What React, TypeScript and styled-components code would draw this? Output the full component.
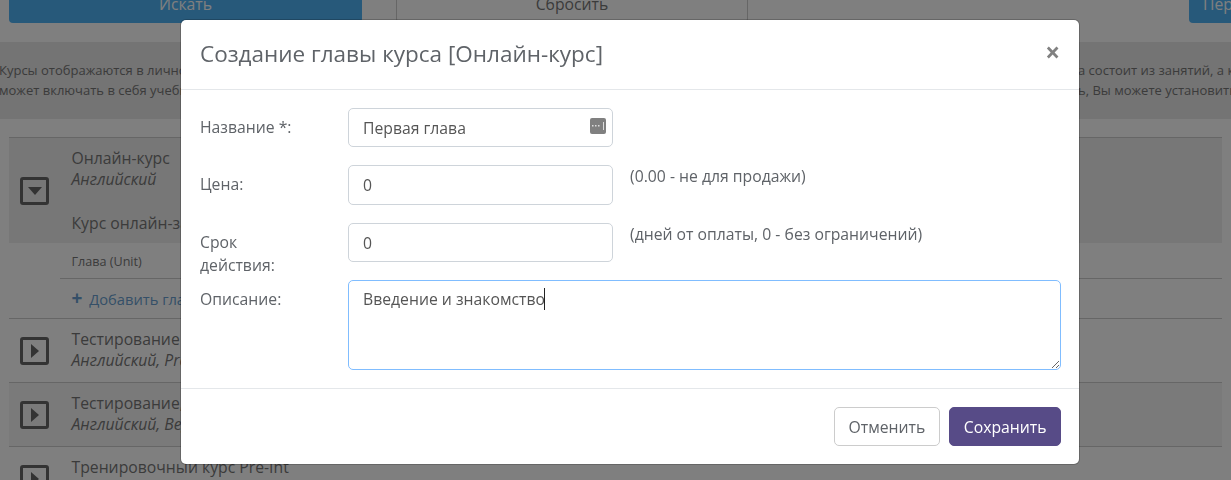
import styled, { createGlobalStyle } from "styled-components";

const GlobalStyle = createGlobalStyle`
  * {
    box-sizing: border-box;
  }

  html,
  body {
    margin: 0;
    padding: 0;
    height: 480px;
    overflow: hidden;
    background: #fff;
    font-family: "Open Sans", "Noto Sans", sans-serif;
    font-size: 15.75px;
    color: #777;
  }
`;

const courses = [
  { title: "Тестирование", subtitle: "Английский, Pre-Intermediate", shaded: false },
  { title: "Тестирование, входной", subtitle: "Английский, Beginner", shaded: true },
  { title: "Тренировочный курс Pre-Int", subtitle: "Английский, Pre-Intermediate", shaded: false },
];

const CourseIcon = ({ open }: { open?: boolean }) => (
  <IconBox>
    <svg width="14" height="14" viewBox="0 0 14 14">
      {open ? <path d="M0 3h14L7 11z" fill="#666" /> : <path d="M3 0l8 7-8 7z" fill="#666" />}
    </svg>
  </IconBox>
);

const App = () => {
  return (
    <>
      <GlobalStyle />
      <Page>
        <SearchBar>
          <SearchButton>Искать</SearchButton>
          <ResetButton>Сбросить</ResetButton>
          <BarSpacer />
          <CreateButton>Перейти</CreateButton>
        </SearchBar>

        <InfoBand>
          <InfoLine>
            <InfoLeft>Курсы отображаются в личном кабинете ученика</InfoLeft>
            <InfoRight>а состоит из занятий, а каждое занятие</InfoRight>
          </InfoLine>
          <InfoLine>
            <InfoLeft>может включать в себя учебные материалы</InfoLeft>
            <InfoRight>ь, Вы можете установить цену</InfoRight>
          </InfoLine>
        </InfoBand>

        <CourseList>
          <OpenCourse>
            <CourseHead>
              <OpenIconColumn>
                <CourseIcon open />
              </OpenIconColumn>
              <div>
                <CourseTitle>Онлайн-курс</CourseTitle>
                <CourseSubtitle>Английский</CourseSubtitle>
                <CourseKind>Курс онлайн-занятий</CourseKind>
              </div>
            </CourseHead>
            <UnitHeader>Глава (Unit)</UnitHeader>
            <AddUnit>
              <PlusSign>+</PlusSign> Добавить главу
            </AddUnit>
          </OpenCourse>

          {courses.map((course) => (
            <CourseRow key={course.title} $shaded={course.shaded}>
              <IconColumn>
                <CourseIcon />
              </IconColumn>
              <div>
                <CourseTitle>{course.title}</CourseTitle>
                <CourseSubtitle>{course.subtitle}</CourseSubtitle>
              </div>
            </CourseRow>
          ))}
        </CourseList>
      </Page>

      <Backdrop />

      <Modal>
        <ModalHeader>
          <ModalTitle>Создание главы курса [Онлайн-курс]</ModalTitle>
          <CloseButton>×</CloseButton>
        </ModalHeader>

        <ModalBody>
          <FormRow $height={57}>
            <FieldLabel>Название *:</FieldLabel>
            <InputWrap>
              <TextInput defaultValue="Первая глава" $height={39} />
              <KeyIcon width="16" height="16" viewBox="0 0 16 16">
                <rect width="16" height="16" rx="2" fill="#808080" />
                <rect x="2" y="7" width="1.5" height="1.5" fill="#ddd" />
                <rect x="5" y="7" width="1.5" height="1.5" fill="#ddd" />
                <rect x="8" y="7" width="1.5" height="1.5" fill="#ddd" />
                <rect x="13" y="4" width="1" height="8" fill="#ddd" />
              </KeyIcon>
            </InputWrap>
          </FormRow>
          <FormRow $height={58}>
            <FieldLabel>Цена:</FieldLabel>
            <InputWrap>
              <TextInput defaultValue="0" $height={40} />
            </InputWrap>
            <FieldHint>(0.00 - не для продажи)</FieldHint>
          </FormRow>
          <FormRow $height={57}>
            <FieldLabel $wrapped>Срок действия:</FieldLabel>
            <InputWrap>
              <TextInput defaultValue="0" $height={39} />
            </InputWrap>
            <FieldHint>(дней от оплаты, 0 - без ограничений)</FieldHint>
          </FormRow>
          <FormRow $height={90}>
            <FieldLabel>Описание:</FieldLabel>
            <DescriptionWrap>
              <Description defaultValue="Введение и знакомство" />
              <TextCursor />
            </DescriptionWrap>
          </FormRow>
        </ModalBody>

        <ModalFooter>
          <CancelButton>Отменить</CancelButton>
          <SaveButton>Сохранить</SaveButton>
        </ModalFooter>
      </Modal>
    </>
  );
};

const Page = styled.div`
  height: 480px;
  overflow: hidden;
`;

const SearchBar = styled.div`
  display: flex;
  height: 23px;
  margin: 0 0 19px;
  padding: 0 0 0 9px;
`;

const BarButton = styled.button`
  height: 39px;
  margin-top: -16px;
  padding: 0;
  border-radius: 4px;
  font-family: inherit;
  font-size: 15.75px;
  line-height: 20px;
`;

const SearchButton = styled(BarButton)`
  width: 353px;
  border: 0;
  background: #4eb2f4;
  color: #fff;
`;

const ResetButton = styled(BarButton)`
  width: 352px;
  margin-left: 34px;
  border: 1px solid #ccc;
  background: #fff;
  color: #777;
`;

const BarSpacer = styled.div`
  flex: 1;
`;

const CreateButton = styled(BarButton)`
  flex: none;
  width: 120px;
  margin-right: -78px;
  border: 0;
  background: #4eb2f4;
  color: #fff;
  text-align: left;
  padding-left: 14px;
`;

const InfoBand = styled.div`
  height: 77px;
  padding: 18px 0 0;
  background: #e8e8e8;
  font-size: 13px;
  line-height: 20px;
  color: #777;
`;

const InfoLine = styled.div`
  display: flex;
  white-space: nowrap;
  overflow: hidden;
`;

const InfoLeft = styled.span`
  flex: none;
  width: 1079px;
  margin-left: -1px;
`;

const InfoRight = styled.span`
  flex: none;
`;

const CourseList = styled.div`
  margin: 18px 0 0 9px;
  width: 1213px;
  border-top: 1px solid #ccc;
`;

const OpenCourse = styled.div`
  border-bottom: 1px solid #ccc;
`;

const CourseHead = styled.div`
  display: flex;
  height: 105px;
  padding-top: 9px;
  background: #eee;
`;

const IconColumn = styled.div`
  flex: none;
  width: 62.5px;
  padding: 9px 0 0 11px;
`;

const OpenIconColumn = styled(IconColumn)`
  padding-top: 30px;
`;

const IconBox = styled.div`
  display: flex;
  align-items: center;
  justify-content: center;
  width: 29px;
  height: 28px;
  border: 3px solid #666;
  border-radius: 3px;
`;

const CourseTitle = styled.div`
  font-size: 15.75px;
  line-height: 22px;
`;

const CourseSubtitle = styled.div`
  font-size: 15.75px;
  line-height: 21px;
  font-style: italic;
`;

const CourseKind = styled.div`
  margin-top: 22px;
  font-size: 15.75px;
  line-height: 22px;
`;

const UnitHeader = styled.div`
  height: 36px;
  margin-left: 51px;
  padding: 10px 0 0 11.5px;
  border-bottom: 1px solid #ccc;
  font-size: 12.6px;
  line-height: 18px;
`;

const AddUnit = styled.div`
  height: 39px;
  padding: 8px 0 0 62.5px;
  font-size: 14.7px;
  line-height: 22px;
  color: #6a9fd0;
`;

const PlusSign = styled.span`
  font-weight: 700;
  font-size: 19px;
  margin-right: 3px;
`;

const CourseRow = styled.div<{ $shaded: boolean }>`
  display: flex;
  height: 64px;
  padding-top: 9px;
  border-bottom: 1px solid #ccc;
  background: ${({ $shaded }) => ($shaded ? "#f4f4f4" : "#fff")};
`;

const Backdrop = styled.div`
  position: fixed;
  inset: 0;
  background: rgba(0, 0, 0, 0.5);
`;

const Modal = styled.div`
  position: fixed;
  top: 20px;
  left: 181px;
  width: 898px;
  height: 444px;
  display: flex;
  flex-direction: column;
  background: #fff;
  border-radius: 5px;
  box-shadow: 0 0 0 1px rgba(0, 0, 0, 0.2);
`;

const ModalHeader = styled.div`
  display: flex;
  align-items: flex-start;
  justify-content: space-between;
  height: 70px;
  padding: 19px 19px 0;
  border-bottom: 1px solid #e4e7ea;
`;

const ModalTitle = styled.h5`
  margin: 0;
  font-size: 22.5px;
  font-weight: 400;
  line-height: 30px;
  color: #5f6368;
`;

const CloseButton = styled.button`
  padding: 0;
  border: 0;
  background: none;
  font-family: inherit;
  font-size: 26px;
  font-weight: 700;
  line-height: 26px;
  color: #818181;
`;

const ModalBody = styled.div`
  flex: 1;
  padding: 18px 18px 0 19px;
`;

const FormRow = styled.div<{ $height: number }>`
  display: flex;
  align-items: flex-start;
  height: ${({ $height }) => $height}px;
`;

const FieldLabel = styled.label<{ $wrapped?: boolean }>`
  flex: none;
  width: 148px;
  padding: ${({ $wrapped }) => ($wrapped ? "8px 70px 0 0" : "8px 0 0")};
  font-size: 15.75px;
  line-height: 23px;
  color: #5f6368;
`;

const InputWrap = styled.div`
  position: relative;
  flex: none;
  width: 265px;
`;

const TextInput = styled.input<{ $height: number }>`
  display: block;
  width: 100%;
  height: ${({ $height }) => $height}px;
  padding: 0 14px;
  border: 1px solid #ced4da;
  border-radius: 5px;
  background: #fff;
  font-family: inherit;
  font-size: 15.75px;
  color: #555;
  outline: none;
`;

const KeyIcon = styled.svg`
  position: absolute;
  top: 10px;
  right: 7px;
`;

const FieldHint = styled.div`
  margin-left: 17px;
  font-size: 15.75px;
  line-height: 22px;
  color: #5f6368;
`;

const DescriptionWrap = styled.div`
  position: relative;
  flex: 1;
`;

const Description = styled.textarea`
  display: block;
  width: 100%;
  height: 90px;
  padding: 7px 14px;
  border: 1px solid #80bdff;
  border-radius: 5px;
  font-family: inherit;
  font-size: 15.75px;
  line-height: 23px;
  color: #555;
  outline: none;
  resize: vertical;
`;

const TextCursor = styled.span`
  position: absolute;
  top: 8px;
  left: 196px;
  width: 1px;
  height: 22px;
  background: #222;
`;

const ModalFooter = styled.div`
  display: flex;
  justify-content: flex-end;
  gap: 9px;
  height: 76px;
  padding: 18px 18px 0 0;
  border-top: 1px solid #e4e7ea;
`;

const FooterButton = styled.button`
  height: 39px;
  padding: 0 13.5px;
  border-radius: 5px;
  font-family: inherit;
  font-size: 15.75px;
`;

const CancelButton = styled(FooterButton)`
  padding: 0 14px;
  border: 1px solid #ccc;
  background: #fff;
  color: #5f6368;
`;

const SaveButton = styled(FooterButton)`
  border: 1px solid #574b87;
  background: #574b87;
  color: #fff;
`;

export default App;
